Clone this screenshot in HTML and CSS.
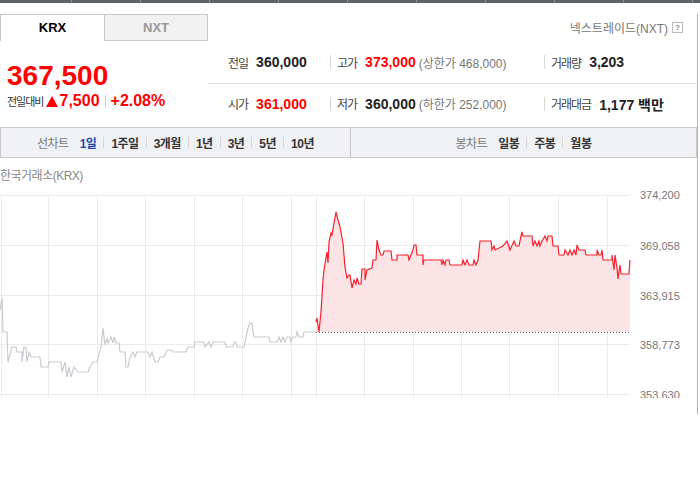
FILE: index.html
```html
<html>
<head>
  <meta http-equiv="Content-Type" content="text/html; charset=utf8">
  <title>KRX chart</title>
  <link rel="stylesheet" href="styles.css">
</head>
<body>
  <div class="topbar"></div>
  <div class="stock">
    <div class="tabs">
      <span class="tab tab_on">KRX</span>
      <span class="tab tab_off">NXT</span>
      <span class="nxt">넥스트레이드(NXT) <span class="help">?</span></span>
    </div>

    <div class="summary">
      <div class="now">
        <div class="price">367,500</div>
        <div class="change">
          <span class="lbl">전일대비</span>
          <span class="tri"></span>7,500
          <span class="sep"></span>+2.08%
        </div>
      </div>
      <div class="info">
        <div class="row">
          <div class="cell c1"><span class="k">전일</span><b>360,000</b></div>
          <div class="cell c2"><span class="k">고가</span><b class="red">373,000</b><span class="lim">(상한가 468,000)</span></div>
          <div class="cell c3"><span class="k">거래량</span><b>3,203</b></div>
        </div>
        <div class="row">
          <div class="cell c1"><span class="k">시가</span><b class="red">361,000</b></div>
          <div class="cell c2"><span class="k">저가</span><b>360,000</b><span class="lim">(하한가 252,000)</span></div>
          <div class="cell c3"><span class="k">거래대금</span><b>1,177 백만</b></div>
        </div>
      </div>
    </div>

    <div class="periods">
      <div class="half">
        <span class="plbl">선차트</span>
        <span class="item item_on">1일</span><span class="bar"></span>
        <span class="item">1주일</span><span class="bar"></span>
        <span class="item">3개월</span><span class="bar"></span>
        <span class="item">1년</span><span class="bar"></span>
        <span class="item">3년</span><span class="bar"></span>
        <span class="item">5년</span><span class="bar"></span>
        <span class="item">10년</span>
      </div>
      <div class="half">
        <span class="plbl">봉차트</span>
        <span class="item">일봉</span><span class="bar"></span>
        <span class="item">주봉</span><span class="bar"></span>
        <span class="item">월봉</span>
      </div>
    </div>

    <div class="market">한국거래소(KRX)</div>

    <svg class="chart" width="697" height="213" viewBox="0 185 697 213">
      <g class="grid">
        <line x1="0" y1="195.5" x2="630" y2="195.5"/>
        <line x1="0" y1="245.5" x2="630" y2="245.5"/>
        <line x1="0" y1="295.5" x2="630" y2="295.5"/>
        <line x1="0" y1="344.5" x2="630" y2="344.5"/>
        <line x1="0" y1="394.5" x2="630" y2="394.5"/>
        <line x1="1.5" y1="195" x2="1.5" y2="398"/>
        <line x1="48.5" y1="195" x2="48.5" y2="398"/>
        <line x1="97.5" y1="195" x2="97.5" y2="398"/>
        <line x1="145.5" y1="195" x2="145.5" y2="398"/>
        <line x1="194.5" y1="195" x2="194.5" y2="398"/>
        <line x1="242.5" y1="195" x2="242.5" y2="398"/>
        <line x1="291.5" y1="195" x2="291.5" y2="398"/>
        <line x1="316.5" y1="195" x2="316.5" y2="398"/>
        <line x1="364.5" y1="195" x2="364.5" y2="398"/>
        <line x1="413.5" y1="195" x2="413.5" y2="398"/>
        <line x1="461.5" y1="195" x2="461.5" y2="398"/>
        <line x1="509.5" y1="195" x2="509.5" y2="398"/>
        <line x1="558.5" y1="195" x2="558.5" y2="398"/>
        <line x1="607.5" y1="195" x2="607.5" y2="398"/>
      </g>

      <polygon class="area" points="316,322 317,318 319,332 321,312 323,280 324,270 327,252 328,263 329,242 331,233 332,235 334,223 336,212 338,220 340,227 343,243 345,267 347,278 349,275 350,275 352,288 354,280 356,284 357,278 359,284 361,284 362,269 365,269 365,280 367,270 372,268 373,260 376,260 377,240 379,250 381,255 383,255 384,251 391,251 392,260 397,260 397,255 408,255 409,260 411,255 413,250 414,245 416,245 417,255 423,255 423,265 424,260 441,260 442,265 443,260 445,265 446,260 449,260 450,265 462,265 463,260 465,265 467,260 469,265 473,265 474,260 476,265 478,260 480,241 491,241 492,250 494,246 495,250 503,246 507,241 510,250 514,241 516,246 519,246 521,236 522,232 523,236 532,236 533,246 535,241 537,246 539,241 540,246 542,241 545,236 547,241 548,236 552,236 553,246 558,246 559,255 564,255 565,250 568,255 570,250 572,255 574,250 576,255 577,245 579,250 585,250 586,255 597,255 597,250 599,255 601,255 602,250 603,260 612,260 612,255 614,270 615,255 617,268 618,279 620,265 621,274 629,274 630,260 630,332 316,332"/>

      <line class="base" x1="316" y1="332.5" x2="630" y2="332.5"/>

      <polyline class="prev" points="0,310 2,298 3,332 7,332 8,362 12,347 16,347 17,352 22,352 22,362 24,347 26,347 27,362 29,352 31,357 40,357 41,367 48,367 49,362 61,362 62,372 65,362 67,377 69,367 71,377 74,367 78,372 88,372 90,367 93,362 97,362 101,347 103,328 105,345 107,338 108,343 111,337 113,343 114,337 116,343 119,343 120,352 125,352 126,367 128,367 130,357 133,352 135,357 137,352 148,352 150,357 152,352 155,362 158,362 160,357 164,357 167,350 172,350 173,352 186,352 188,347 194,347 195,342 204,342 205,347 209,342 211,347 213,342 225,342 226,347 233,347 234,342 236,342 237,347 244,347 245,342 248,328 250,323 252,323 254,337 269,337 270,342 277,342 279,337 281,342 283,337 285,342 287,337 290,337 291,342 293,337 296,337 297,332 299,337 303,337 304,332 316,332"/>

      <polyline class="today" points="316,322 317,318 319,332 321,312 323,280 324,270 327,252 328,263 329,242 331,233 332,235 334,223 336,212 338,220 340,227 343,243 345,267 347,278 349,275 350,275 352,288 354,280 356,284 357,278 359,284 361,284 362,269 365,269 365,280 367,270 372,268 373,260 376,260 377,240 379,250 381,255 383,255 384,251 391,251 392,260 397,260 397,255 408,255 409,260 411,255 413,250 414,245 416,245 417,255 423,255 423,265 424,260 441,260 442,265 443,260 445,265 446,260 449,260 450,265 462,265 463,260 465,265 467,260 469,265 473,265 474,260 476,265 478,260 480,241 491,241 492,250 494,246 495,250 503,246 507,241 510,250 514,241 516,246 519,246 521,236 522,232 523,236 532,236 533,246 535,241 537,246 539,241 540,246 542,241 545,236 547,241 548,236 552,236 553,246 558,246 559,255 564,255 565,250 568,255 570,250 572,255 574,250 576,255 577,245 579,250 585,250 586,255 597,255 597,250 599,255 601,255 602,250 603,260 612,260 612,255 614,270 615,255 617,268 618,279 620,265 621,274 629,274 630,260"/>

      <g class="axis">
        <text x="640" y="199">374,200</text>
        <text x="640" y="250">369,058</text>
        <text x="640" y="300">363,915</text>
        <text x="640" y="349">358,773</text>
        <text x="640" y="399">353,630</text>
      </g>
    </svg>
  </div>
</body>
</html>
```

FILE: styles.css
```css
* {
  box-sizing: border-box;
}
body {
  margin: 0;
  font-family: "Liberation Sans", "Noto Sans CJK KR", sans-serif;
  color: #333333;
  background-color: #ffffff;
}
.topbar {
  height: 3px;
  background-color: #5d626d;
  background-image: repeating-linear-gradient(90deg, #5d626d 0 68px, #8b8f97 68px 69px);
  background-position: 3px 0;
}
.stock {
  width: 698px;
  height: 400px;
  border-right: 1px solid #b5b5b5;
}

/* market tabs */
.tabs {
  display: flex;
  align-items: flex-start;
  height: 27px;
  margin-top: 11px;
}
.tab {
  width: 104px;
  height: 27px;
  line-height: 25px;
  text-align: center;
  font-size: 13px;
  font-weight: bold;
  border: 1px solid #c8c8c8;
}
.tab_on {
  color: #000000;
  background-color: #ffffff;
  border-right: none;
  border-bottom: none;
}
.tab_off {
  color: #999999;
  background-color: #f2f2f2;
}
.nxt {
  display: flex;
  align-items: center;
  gap: 4px;
  margin-left: auto;
  margin-right: 14px;
  height: 27px;
  font-size: 12px;
  color: #777777;
}
.help {
  width: 11px;
  height: 11px;
  border: 1px solid #bbbbbb;
  font-size: 8px;
  font-weight: bold;
  line-height: 9px;
  text-align: center;
  color: #888888;
}

/* price summary */
.summary {
  display: flex;
  height: 86px;
}
.now {
  width: 208px;
  padding: 19px 0 0 7px;
}
.price {
  font-size: 28px;
  font-weight: bold;
  line-height: 32px;
  color: #ff0000;
}
.change {
  display: flex;
  align-items: center;
  height: 18px;
  font-size: 16px;
  font-weight: bold;
  color: #ff0000;
}
.change .lbl {
  font-size: 11px;
  font-weight: normal;
  letter-spacing: -1px;
  color: #333333;
  margin-right: 3px;
}
.tri {
  width: 0;
  height: 0;
  border-left: 6px solid transparent;
  border-right: 6px solid transparent;
  border-bottom: 11px solid #ff0000;
  margin-right: 1px;
}
.change .sep {
  width: 1px;
  height: 12px;
  background-color: #cccccc;
  margin: 0 5px;
}
.info {
  flex: 1;
}
.row {
  display: flex;
  align-items: center;
  height: 43px;
  border-bottom: 1px solid #e5e5e5;
}
.row + .row {
  height: 39px;
  border-bottom: none;
}
.cell {
  display: flex;
  align-items: center;
  height: 14px;
}
.c1 {
  width: 122px;
  padding-left: 20px;
}
.c2 {
  width: 214px;
  padding-left: 6px;
  border-left: 1px solid #d8d8d8;
}
.c3 {
  padding-left: 6px;
  border-left: 1px solid #d8d8d8;
}
.k {
  font-size: 12px;
  letter-spacing: -1px;
  color: #444444;
  margin-right: 8px;
}
.cell b {
  font-size: 14px;
  color: #222222;
}
.cell b.red {
  color: #ff0000;
}
.lim {
  font-size: 12px;
  color: #777777;
  margin-left: 3px;
}

/* chart period bar */
.periods {
  display: flex;
  height: 31px;
  border: 1px solid #c8c8c8;
  background-color: #eff1f5;
}
.half {
  display: flex;
  align-items: center;
  justify-content: center;
  flex: 1;
  font-size: 12px;
}
.half:first-child {
  flex: none;
  width: 350px;
  border-right: 1px solid #c8c8c8;
}
.plbl {
  color: #777777;
  letter-spacing: -0.5px;
  margin-right: 11px;
}
.item {
  font-weight: bold;
  letter-spacing: -0.5px;
  color: #333333;
}
.item_on {
  color: #1e44a6;
}
.bar {
  width: 1px;
  height: 11px;
  background-color: #d5d5d5;
  margin: 0 7px;
}

/* chart */
.market {
  height: 27px;
  padding-top: 10px;
  font-size: 12px;
  line-height: 16px;
  letter-spacing: -0.5px;
  color: #888888;
}
.chart {
  display: block;
}
.grid line {
  stroke: #ebebeb;
  stroke-width: 1;
}
.area {
  fill: #fce4e6;
}
.base {
  stroke: #666666;
  stroke-width: 1;
  stroke-dasharray: 1 2;
}
.prev {
  fill: none;
  stroke: #c8cbd0;
  stroke-width: 1.2;
}
.today {
  fill: none;
  stroke: #f5222d;
  stroke-width: 1.2;
}
.axis text {
  font-family: "Liberation Sans", sans-serif;
  font-size: 11px;
  fill: #777777;
}
```
